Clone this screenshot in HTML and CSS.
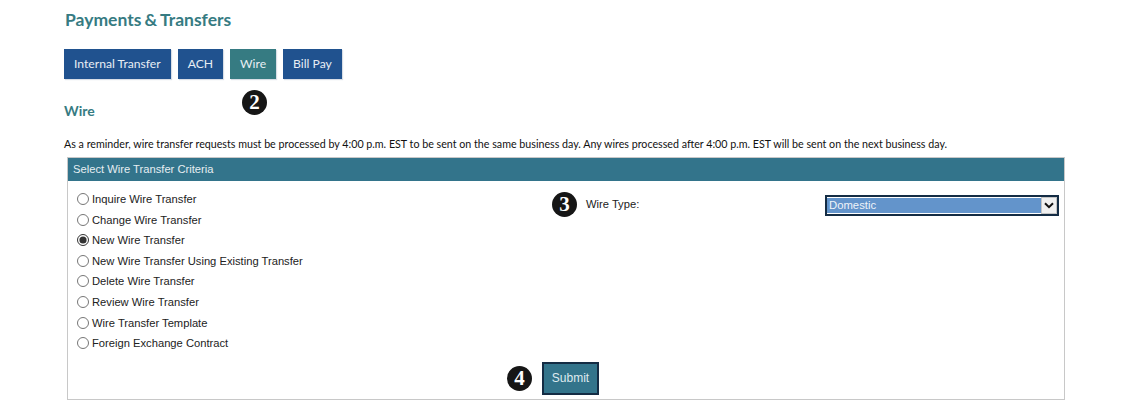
FILE: index.html
```html
<!DOCTYPE html>
<html lang="en">
<head>
  <meta charset="UTF-8">
  <title>Payments &amp; Transfers</title>
  <link rel="stylesheet" href="styles.css">
</head>
<body>
  <h1 class="page-title">Payments &amp; Transfers</h1>

  <div class="tabs">
    <a class="tab">Internal Transfer</a>
    <a class="tab">ACH</a>
    <a class="tab tab-active">Wire<span class="step step-wire">2</span></a>
    <a class="tab">Bill Pay</a>
  </div>

  <h2 class="section-title">Wire</h2>
  <p class="reminder">As a reminder, wire transfer requests must be processed by 4:00 p.m. EST to be sent on the same business day. Any wires processed after 4:00 p.m. EST will be sent on the next business day.</p>

  <div class="panel">
    <div class="panel-header">Select Wire Transfer Criteria</div>
    <div class="panel-body">
      <div class="radio-list">
        <label class="radio-item"><input type="radio" name="action">Inquire Wire Transfer</label>
        <label class="radio-item"><input type="radio" name="action">Change Wire Transfer</label>
        <label class="radio-item"><input type="radio" name="action" checked>New Wire Transfer</label>
        <label class="radio-item"><input type="radio" name="action">New Wire Transfer Using Existing Transfer</label>
        <label class="radio-item"><input type="radio" name="action">Delete Wire Transfer</label>
        <label class="radio-item"><input type="radio" name="action">Review Wire Transfer</label>
        <label class="radio-item"><input type="radio" name="action">Wire Transfer Template</label>
        <label class="radio-item"><input type="radio" name="action">Foreign Exchange Contract</label>
      </div>
      <div class="wire-type">
        <span class="step">3</span>
        <span class="wire-label">Wire Type:</span>
        <div class="select-box">
          <span class="select-value">Domestic</span>
          <span class="select-arrow">
            <svg width="10" height="7" viewBox="0 0 10 7"><path d="M1 1.2 L5 5.2 L9 1.2" fill="none" stroke="#111" stroke-width="2"/></svg>
          </span>
        </div>
      </div>
    </div>
    <div class="panel-footer">
      <span class="step">4</span>
      <button class="submit-button">Submit</button>
    </div>
  </div>
</body>
</html>
```

FILE: styles.css
```css
html, body {
  height: 402px;
  overflow: hidden;
}

body {
  margin: 0;
  padding: 9px 63px 0 64px;
  background-color: white;
  font-family: "Lato", sans-serif;
  color: #111;
}

.page-title {
  margin: 0 0 18px 1px;
  font-size: 17.5px;
  line-height: 22px;
  font-weight: 700;
  word-spacing: -1px;
  color: #367b82;
}

.tabs {
  display: flex;
  gap: 7px;
}

.tab {
  position: relative;
  display: flex;
  align-items: center;
  box-sizing: border-box;
  height: 30px;
  padding: 0 10px 2px 10px;
  background-color: #20528f;
  box-shadow: 1px 1px 1px #d8dee6;
  color: #e8eef4;
  font-size: 12.15px;
}

.tab-active {
  background-color: #367b82;
}

.step {
  display: flex;
  align-items: center;
  justify-content: center;
  flex-shrink: 0;
  width: 25px;
  height: 25px;
  border-radius: 50%;
  background-color: #161616;
  color: white;
  font-family: "Liberation Serif", serif;
  font-size: 21px;
  font-weight: 700;
}

.step-wire {
  position: absolute;
  left: 12px;
  top: 41px;
}

.section-title {
  margin: 23px 0 0 0;
  font-size: 14px;
  line-height: 18px;
  font-weight: 700;
  color: #367b82;
}

.reminder {
  margin: 17px 0 0 0;
  font-size: 10.7px;
  line-height: 14px;
  white-space: nowrap;
}

.panel {
  margin: 6px 0 0 3px;
  width: 996px;
  height: 241px;
  border: 1px solid #c8c8c8;
  font-family: "Liberation Sans", sans-serif;
  font-size: 11.2px;
}

.panel-header {
  height: 23px;
  padding-left: 5px;
  background-color: #33748b;
  color: #e6eef2;
  line-height: 23px;
}

.panel-body {
  display: flex;
  height: 177px;
  padding-left: 8px;
}

.radio-list {
  display: flex;
  flex-direction: column;
  gap: 6.6px;
  width: 476px;
  padding-top: 11px;
}

.radio-item {
  display: flex;
  align-items: center;
  height: 14px;
  color: #222;
}

.radio-item input {
  width: 12px;
  height: 12px;
  margin: 0 3px 0 1px;
  accent-color: #333;
}

.wire-type {
  display: flex;
  align-items: flex-start;
  padding-top: 11px;
}

.wire-label {
  width: 239px;
  margin-left: 9px;
  padding-top: 6px;
  color: #222;
}

.select-box {
  display: flex;
  width: 234px;
  height: 21px;
  box-sizing: border-box;
  margin-top: 3px;
  border: 2px solid #142c44;
  background-color: white;
}

.select-value {
  flex: 1;
  margin: 1px 0;
  padding-left: 2px;
  background-color: #6394cb;
  color: #eef3f9;
  font-size: 11.3px;
  line-height: 14px;
}

.select-arrow {
  display: flex;
  align-items: center;
  justify-content: center;
  width: 16px;
  background-color: #f0f0f0;
  border: 1px solid #c4c4c4;
  box-sizing: border-box;
}

.panel-footer {
  display: flex;
  align-items: center;
  height: 40px;
  padding-left: 439px;
  gap: 10px;
}

.submit-button {
  width: 57px;
  height: 33px;
  padding: 0;
  border: 2px solid #142c44;
  background-color: #33748b;
  color: #dfeaef;
  font-family: "Liberation Sans", sans-serif;
  font-size: 12px;
}
```
